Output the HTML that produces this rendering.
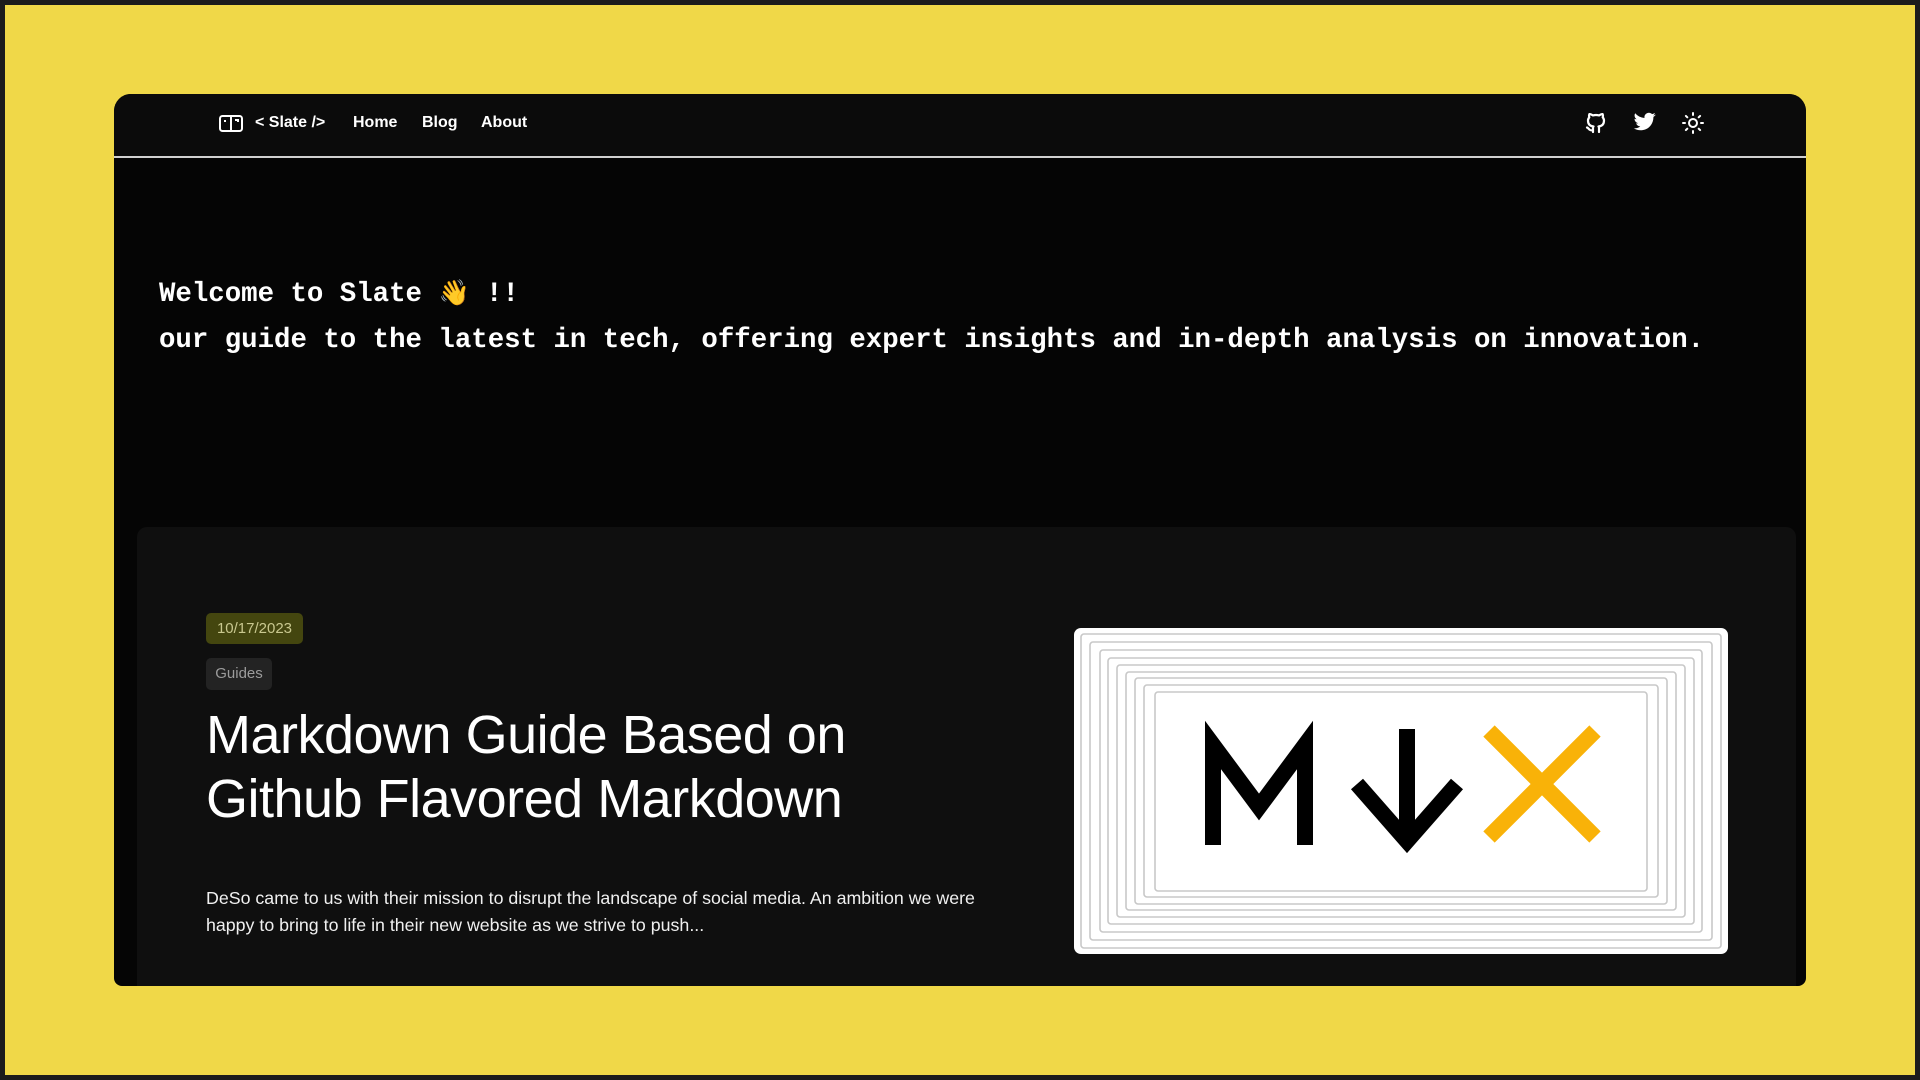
<!DOCTYPE html>
<html><head><meta charset="utf-8"><style>
*{margin:0;padding:0;box-sizing:border-box}
html,body{width:1920px;height:1080px;overflow:hidden}
body{background:#f0d848;border:5px solid #1c1c1c;position:relative;font-family:"Liberation Sans",sans-serif}
.win{position:absolute;left:109px;top:89px;width:1692px;height:892px;background:#050505;border-radius:17px 17px 8px 8px;overflow:hidden}
.in{position:absolute;left:-5px;top:-5px;width:1702px;height:902px}
.nav{position:absolute;left:0;top:0;right:0;height:69px;background:#0b0b0b;border-bottom:2px solid #d0d0d0}
.nav .t{position:absolute;top:25px;color:#fff;font-weight:bold;font-size:16px}
.ic{position:absolute;top:22px}
.hero{position:absolute;left:50px;font-family:"Liberation Mono",monospace;font-weight:bold;color:#fff;font-size:27.4px;white-space:nowrap}
.card{position:absolute;left:28px;top:438px;width:1659px;height:500px;background:#0f0f0f;border-radius:10px}
.date{position:absolute;left:97px;top:524px;width:97px;height:31px;background:#44460f;color:#c9c88f;border-radius:5px;font-size:15px;line-height:31px;text-align:center}
.tag{position:absolute;left:97px;top:569px;width:66px;height:32px;background:#232323;color:#9c9c9c;border-radius:5px;font-size:15px;line-height:32px;text-align:center}
.title{position:absolute;left:97px;top:614px;color:#fff;font-size:54px;line-height:64px;letter-spacing:-0.5px}
.desc{position:absolute;left:97px;top:796px;width:800px;color:#f0f0f0;font-size:17.8px;line-height:27px}
.img{position:absolute;left:965px;top:539px;width:654px;height:326px;background:#fff;border-radius:7px;overflow:hidden}
</style></head><body>
<div class="win"><div class="in">
 <div class="nav">
  <svg class="ic" style="left:110px;top:25px" width="24" height="20" viewBox="0 0 24 20" fill="none" stroke="#fff" stroke-width="2"><rect x="1" y="2" width="22" height="15" rx="2.5"/><line x1="12" y1="2" x2="12" y2="17"/><line x1="6" y1="6" x2="6" y2="8"/><path d="M16 6h3v2"/></svg>
  <span class="t" style="left:146px">&lt; Slate /&gt;</span>
  <span class="t" style="left:244px">Home</span>
  <span class="t" style="left:313px">Blog</span>
  <span class="t" style="left:372px">About</span>
  <svg class="ic" style="left:1475px" width="24" height="24" viewBox="0 0 24 24" fill="none" stroke="#fff" stroke-width="2.2" stroke-linecap="round" stroke-linejoin="round"><path d="M9 19c-4 1.3-4-2-6-2.5M15 21v-3.5c0-1 .1-1.4-.5-2 2.8-.3 5.5-1.4 5.5-6a4.6 4.6 0 0 0-1.3-3.2 4.2 4.2 0 0 0-.1-3.2s-1.1-.3-3.5 1.3a12.3 12.3 0 0 0-6.2 0C6.5 2.8 5.4 3.1 5.4 3.1a4.2 4.2 0 0 0-.1 3.2A4.6 4.6 0 0 0 4 9.5c0 4.6 2.7 5.7 5.5 6-.6.6-.6 1.2-.5 2V21"/></svg>
  <svg class="ic" style="left:1524px" width="24" height="24" viewBox="0 0 24 24" fill="#fff"><path d="M23 3.5a10 10 0 0 1-2.9 1A4.5 4.5 0 0 0 22 2a9 9 0 0 1-2.9 1.1A4.5 4.5 0 0 0 11.5 7 12.8 12.8 0 0 1 2.2 2.3a4.5 4.5 0 0 0 1.4 6A4.4 4.4 0 0 1 1.5 7.8a4.5 4.5 0 0 0 3.6 4.4 4.5 4.5 0 0 1-2 .1 4.5 4.5 0 0 0 4.2 3.1A9 9 0 0 1 0.7 17.3 12.8 12.8 0 0 0 7.6 19.3c8.3 0 12.8-6.9 12.8-12.8v-.6A9 9 0 0 0 23 3.5z"/></svg>
  <svg class="ic" style="left:1572px" width="24" height="24" viewBox="0 0 24 24" fill="none" stroke="#fff" stroke-width="2" stroke-linecap="round"><circle cx="12" cy="12" r="4"/><path d="M12 2v2M12 20v2M2 12h2M20 12h2M4.9 4.9l1.4 1.4M17.7 17.7l1.4 1.4M4.9 19.1l1.4-1.4M17.7 6.3l1.4-1.4"/></svg>
 </div>
 <div class="hero" style="top:190px">Welcome to Slate <span style="font-family:'Noto Color Emoji','DejaVu Sans',sans-serif;font-weight:normal;font-size:25px">👋</span> !!</div>
 <div class="hero" style="top:236px">our guide to the latest in tech, offering expert insights and in-depth analysis on innovation.</div>
 <div class="card"></div>
 <div class="date">10/17/2023</div>
 <div class="tag">Guides</div>
 <div class="title">Markdown Guide Based on<br>Github Flavored Markdown</div>
 <div class="desc">DeSo came to us with their mission to disrupt the landscape of social media. An ambition we were<br>happy to bring to life in their new website as we strive to push...</div>
 <div class="img">
  <svg width="654" height="326" viewBox="0 0 654 326" fill="none">
   <g stroke="#c8c8c8" stroke-width="1.6">
    <rect x="7" y="6" width="640" height="314" rx="3"/>
    <rect x="16" y="14" width="622" height="298" rx="3"/>
    <rect x="26" y="22" width="602" height="282" rx="3"/>
    <rect x="34" y="30" width="586" height="266" rx="3"/>
    <rect x="43" y="37" width="568" height="252" rx="3"/>
    <rect x="52" y="44" width="550" height="238" rx="3"/>
    <rect x="61" y="50" width="532" height="226" rx="3"/>
    <rect x="70" y="57" width="514" height="212" rx="3"/>
    <rect x="81" y="64" width="492" height="199" rx="3"/>
   </g>
   <path d="M139 217V117L185 179L231 117V217" stroke="#000" stroke-width="16" stroke-linejoin="miter" stroke-linecap="butt"/>
   <path d="M333 101V205M283 156L333 213L383 156" stroke="#000" stroke-width="16"/>
   <path d="M415 103L521 209M521 103L415 209" stroke="#f9b208" stroke-width="16"/>
  </svg>
 </div>
</div></div>
</body></html>
